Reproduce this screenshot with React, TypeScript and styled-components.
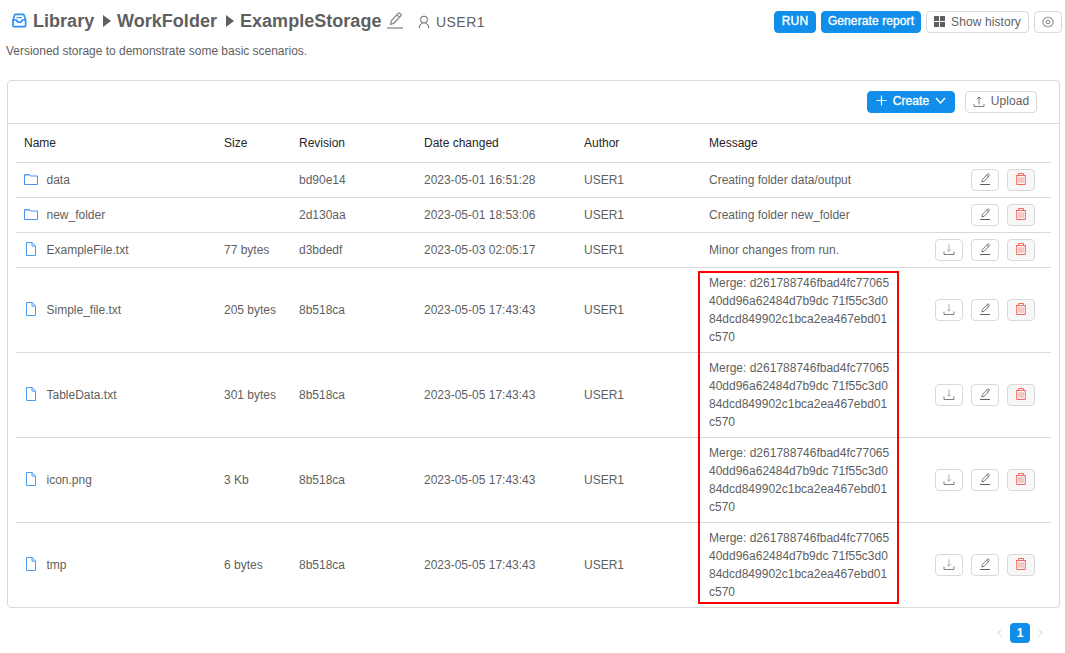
import React from "react";
import styled, { createGlobalStyle, css } from "styled-components";

const Global = createGlobalStyle`
  * { box-sizing: border-box; }
  body { margin: 0; background: #fff; color: #5f5f5f; font: 12px/18px "Liberation Sans", Arial, sans-serif; }
  svg { display: block; flex: none; }
`;

const Page = styled.main`
  position: relative;
  width: 1065px;
  height: 653px;
  padding: 10px 5px 0 7px;
  overflow: hidden;
`;
const Header = styled.header`
  display: flex;
  justify-content: space-between;
  height: 24px;
  padding: 1px 0 0 5px;
  margin-right: -2px;
`;
const Breadcrumb = styled.div`
  display: flex;
  align-items: center;
  height: 20px;
`;
const Crumb = styled.span<{ $w: number; $gap?: number }>`
  width: ${(p) => p.$w}px;
  margin-left: ${(p) => p.$gap ?? 6}px;
  font-size: 18px;
  font-weight: bold;
  line-height: 20px;
  letter-spacing: 0.03px;
  white-space: nowrap;
`;
const Arrow = styled.i`
  width: 8px;
  height: 12px;
  margin-left: 9px;
  background: #5f5f5f;
  clip-path: polygon(0 0, 100% 50%, 0 100%);
`;
const EditTitle = styled.span`
  margin: -2px 0 0 6px;
  color: #929292;
`;
const User = styled.span`
  display: flex;
  align-items: center;
  gap: 6px;
  margin: 1px 0 0 15px;
  font-size: 14px;
  letter-spacing: 0.45px;
`;
const Actions = styled.div`
  display: flex;
  gap: 5px;
`;
const Button = styled.button<{ $w: number; $primary?: boolean; $danger?: boolean; $raised?: boolean }>`
  display: flex;
  align-items: center;
  justify-content: center;
  gap: 6px;
  width: ${(p) => p.$w}px;
  height: 22px;
  padding: 0 0 ${(p) => (p.$primary || p.$raised ? 3 : 1)}px;
  border: 1px solid #d9d9d9;
  border-radius: 4px;
  background: #fff;
  color: #5f5f5f;
  font: 12px/18px "Liberation Sans", Arial, sans-serif;
  letter-spacing: 0.1px;
  white-space: nowrap;
  ${(p) => p.$primary && css`
    border-color: #108ee9;
    background: #108ee9;
    color: #fff;
    -webkit-text-stroke: 0.35px #fff;
  `}
  ${(p) => p.$danger && css`
    background: #f7f7f7;
    color: #f26a5e;
  `}
`;
const Description = styled.p`
  margin: 8px 0 0 -1px;
  height: 38px;
  letter-spacing: -0.02px;
`;
const Card = styled.section`
  width: 1053px;
  height: 528px;
  border: 1px solid #d9d9d9;
  border-radius: 4px;
`;
const Toolbar = styled.div`
  display: flex;
  justify-content: flex-end;
  gap: 10px;
  height: 43px;
  padding: 10px 22px 0 0;
  border-bottom: 1px solid #d9d9d9;
`;
const Table = styled.div`
  padding: 0 8px;
`;
const Row = styled.div<{ $h: number }>`
  display: grid;
  grid-template-columns: 200px 75px 125px 160px 125px 208px 126px;
  align-items: center;
  height: ${(p) => p.$h}px;
  padding-left: 8px;
  border-bottom: 1px solid #d9d9d9;
  &:last-child { border-bottom-color: transparent; }
`;
const HeadRow = styled(Row)`
  color: #262626;
`;
const Name = styled.div`
  display: flex;
  align-items: center;
  gap: 8.5px;
`;
const TypeIcon = styled.span`
  padding-bottom: 2px;
`;
const Cell = styled.div`
  white-space: nowrap;
`;
const RowActions = styled.div`
  display: flex;
  justify-content: flex-end;
  gap: 8px;
  padding-right: 8px;
`;
const Highlight = styled.div`
  position: absolute;
  left: 698px;
  top: 271px;
  width: 201px;
  height: 333px;
  border: 2px solid #f00;
`;
const Pager = styled.nav`
  display: flex;
  align-items: center;
  justify-content: flex-end;
  gap: 8px;
  padding: 15px 17px 0 0;
  color: #d0d0d0;
`;
const PageNumber = styled.span`
  width: 20px;
  height: 20px;
  border-radius: 4px;
  background: #108ee9;
  color: #fff;
  font-weight: bold;
  line-height: 20px;
  text-align: center;
`;

const stroke = { fill: "none", stroke: "currentColor" };

const InboxIcon = () => (
  <svg width="15" height="16" viewBox="0 0 15 16" fill="none" stroke="#2b8ff5" strokeWidth="1.7" strokeLinejoin="round">
    <path d="M3.4 1.4h7.7q.7 0 .9.7l1.6 5v5.6q0 .9-.9.9H1.9q-.9 0-.9-.9V7.1l1.6-5q.2-.7.8-.7zM1 7h3.5q.6 2.4 2.9 2.4T10.3 7h3.3" />
    <path d="M4.7 4.6h5.2" strokeWidth="1.2" />
  </svg>
);
const PencilIcon = () => (
  <svg width="12" height="12" viewBox="0 0 12 12" {...stroke} strokeWidth="0.85">
    <path d="M1 11.5h10" strokeWidth="1" />
    <path d="M2.9 9l.6-2.6 5-5.2q.7-.7 1.4 0l.2.2q.7.7 0 1.4L5.2 8.3zM7.7 2.1l1.6 1.6" />
  </svg>
);
const TitlePencilIcon = () => (
  <svg width="16" height="17" viewBox="0 0 16 17" {...stroke} strokeWidth="1.4">
    <path d="M0 16h16" />
    <path d="M3.6 12.3l.9-3.7 6.6-7q1-1 2 0l.6.5q1 1 0 2l-6.7 7zM10 3l2.5 2.4" />
  </svg>
);
const UserIcon = () => (
  <svg width="12" height="14" viewBox="0 0 12 14" {...stroke}>
    <circle cx="6" cy="4.6" r="3.5" />
    <path d="M1.1 13q.3-4.1 3.5-5M10.9 13q-.3-4.1-3.5-5" />
  </svg>
);
const GridIcon = () => (
  <svg width="11" height="11" viewBox="0 0 11 11" fill="currentColor">
    <path d="M0 0h5v5H0zM6 0h5v5H6zM0 6h5v5H0zM6 6h5v5H6z" />
  </svg>
);
const GearIcon = () => (
  <svg width="12" height="12" viewBox="0 0 12 12" {...stroke} strokeWidth="0.75">
    <path d="M6 .7l1.5 1.2 1.8-.1.5 1.7 1.5 1L10.7 6l.6 1.6-1.5 1-.5 1.7-1.8-.1L6 11.3l-1.5-1.1-1.8.1-.5-1.7-1.5-1L1.3 6 .7 4.5l1.5-1 .5-1.7 1.8.1z" />
    <circle cx="6" cy="6" r="1.8" />
  </svg>
);
const PlusIcon = () => (
  <svg width="11" height="11" viewBox="0 0 11 11" {...stroke} strokeWidth="1.2"><path d="M5.5.5v10M.5 5.5h10" /></svg>
);
const ChevronIcon = () => (
  <svg width="11" height="11" viewBox="0 0 11 11" {...stroke} strokeWidth="1.4"><path d="M1 3l4.5 5L10 3" /></svg>
);
const UploadIcon = () => (
  <svg width="12" height="12" viewBox="0 0 12 12" {...stroke} strokeWidth="0.8"><path d="M1 9v2.5h10V9M6 9.5V2M4 4l2-2 2 2" /></svg>
);
const DownloadIcon = () => (
  <svg width="12" height="12" viewBox="0 0 12 12" {...stroke} strokeWidth="0.8"><path d="M1 8.5v3h10v-3" /><path d="M6 1.2v7M4.2 6.5L6 8.3l1.8-1.8" stroke="#999" /></svg>
);
const TrashIcon = () => (
  <svg width="12" height="12" viewBox="0 0 12 12" {...stroke} strokeWidth="1"><path d="M1 2.5h10M3.5 2.5v-2h5v2M1.7 2.5v9h8.6v-9" /><path d="M4 4.2v5.6M6 4.2v5.6M8 4.2v5.6" strokeWidth="0.7" /></svg>
);
const FolderIcon = () => (
  <svg width="14" height="13" viewBox="0 0 14 13" fill="none" stroke="#4a92ec"><path d="M.5 11.5v-10h5l1 1.5h7v8.5z" /><path d="M1 2.2h5" stroke="#8eb5f2" /></svg>
);
const FileIcon = () => (
  <svg width="14" height="14" viewBox="0 0 14 14" fill="none" stroke="#4a9af0"><path d="M2.5.5h5.6l3.4 3.4v9.6h-9zM8 .5v3.6h3.5" /></svg>
);
const PageArrow = ({ d }: { d: string }) => (
  <svg width="5" height="8" viewBox="0 0 5 8" {...stroke}><path d={d} /></svg>
);

const merge = ["Merge: d261788746fbad4fc77065", "40dd96a62484d7b9dc 71f55c3d0", "84dcd849902c1bca2ea467ebd01", "c570"];
const rows = [
  { name: "data", folder: true, size: "", rev: "bd90e14", date: "2023-05-01 16:51:28", msg: ["Creating folder data/output"] },
  { name: "new_folder", folder: true, size: "", rev: "2d130aa", date: "2023-05-01 18:53:06", msg: ["Creating folder new_folder"] },
  { name: "ExampleFile.txt", size: "77 bytes", rev: "d3bdedf", date: "2023-05-03 02:05:17", msg: ["Minor changes from run."] },
  { name: "Simple_file.txt", size: "205 bytes", rev: "8b518ca", date: "2023-05-05 17:43:43", msg: merge },
  { name: "TableData.txt", size: "301 bytes", rev: "8b518ca", date: "2023-05-05 17:43:43", msg: merge },
  { name: "icon.png", size: "3 Kb", rev: "8b518ca", date: "2023-05-05 17:43:43", msg: merge },
  { name: "tmp", size: "6 bytes", rev: "8b518ca", date: "2023-05-05 17:43:43", msg: merge },
];

export default function App() {
  return (
    <Page>
      <Global />
      <Header>
        <Breadcrumb>
          <InboxIcon />
          <Crumb $w={61}>Library</Crumb>
          <Arrow />
          <Crumb $w={100}>WorkFolder</Crumb>
          <Arrow />
          <Crumb $w={141}>ExampleStorage</Crumb>
          <EditTitle><TitlePencilIcon /></EditTitle>
          <User><UserIcon />USER1</User>
        </Breadcrumb>
        <Actions>
          <Button $w={42} $primary>RUN</Button>
          <Button $w={100} $primary>Generate report</Button>
          <Button $w={103}><GridIcon />Show history</Button>
          <Button $w={28} aria-label="Settings"><GearIcon /></Button>
        </Actions>
      </Header>
      <Description>Versioned storage to demonstrate some basic scenarios.</Description>
      <Card>
        <Toolbar>
          <Button $w={88} $primary><PlusIcon />Create<ChevronIcon /></Button>
          <Button $w={72} $raised><UploadIcon />Upload</Button>
        </Toolbar>
        <Table>
          <HeadRow $h={39}>
            {["Name", "Size", "Revision", "Date changed", "Author", "Message"].map((t) => <Cell key={t}>{t}</Cell>)}
          </HeadRow>
          {rows.map((r) => (
            <Row key={r.name} $h={r.msg.length > 1 ? 85 : 35}>
              <Name><TypeIcon>{r.folder ? <FolderIcon /> : <FileIcon />}</TypeIcon>{r.name}</Name>
              <Cell>{r.size}</Cell>
              <Cell>{r.rev}</Cell>
              <Cell>{r.date}</Cell>
              <Cell>USER1</Cell>
              <Cell>{r.msg.map((m) => <div key={m}>{m}</div>)}</Cell>
              <RowActions>
                {!r.folder && <Button $w={28} $raised aria-label="Download"><DownloadIcon /></Button>}
                <Button $w={28} $raised aria-label="Edit"><PencilIcon /></Button>
                <Button $w={28} $raised $danger aria-label="Delete"><TrashIcon /></Button>
              </RowActions>
            </Row>
          ))}
        </Table>
      </Card>
      <Pager>
        <PageArrow d="M4 1L1 4l3 3" />
        <PageNumber>1</PageNumber>
        <PageArrow d="M1 1l3 3-3 3" />
      </Pager>
      <Highlight />
    </Page>
  );
}
